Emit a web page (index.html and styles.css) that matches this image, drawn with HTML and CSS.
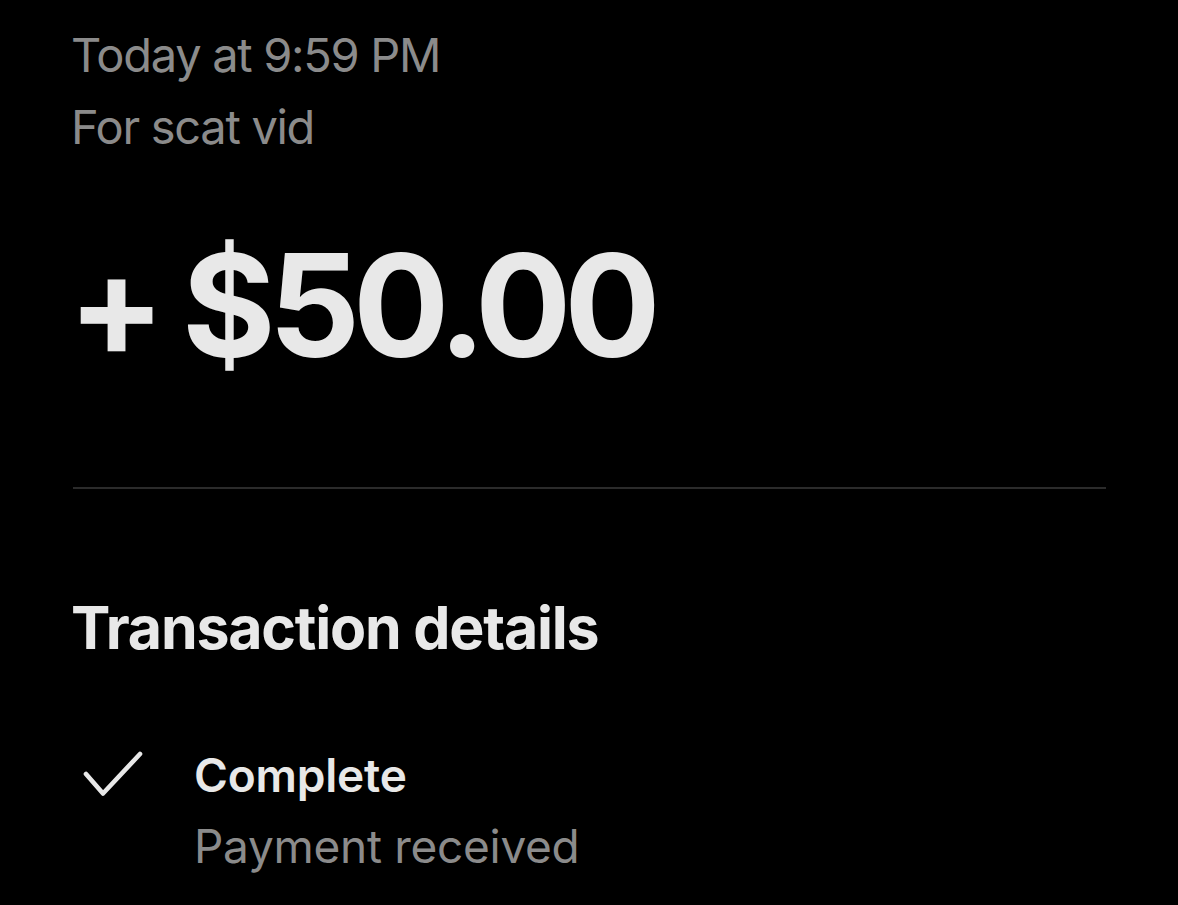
FILE: index.html
```html
<!DOCTYPE html>
<html>
<head>
<meta charset="utf-8">
<link rel="stylesheet" href="styles.css">
</head>
<body>
<main class="page">
  <section class="header">
    <div class="meta">Today at 9:59 PM</div>
    <div class="meta">For scat vid</div>
    <div class="amount"><span class="sign">+</span><span class="value">$50.00</span></div>
  </section>
  <hr class="divider">
  <section class="details">
    <h2 class="title">Transaction details</h2>
    <div class="row">
      <svg class="check" viewBox="0 0 64 52" width="64" height="52">
        <path d="M6 26 L23 45.5 L60 6" fill="none" stroke="#e8e8e8" stroke-width="4.6" stroke-linecap="round" stroke-linejoin="round"/>
      </svg>
      <div class="row-text">
        <div class="row-title">Complete</div>
        <div class="row-sub">Payment received</div>
      </div>
    </div>
  </section>
</main>
</body>
</html>
```

FILE: styles.css
```css
html, body {
  margin: 0;
  padding: 0;
  background: #000;
  height: 100%;
  overflow: hidden;
}
.page {
  padding: 19px 72px 0 71px;
  font-family: Inter, "Noto Sans", sans-serif;
  color: #e8e8e8;
}
.meta {
  font-size: 47px;
  line-height: 72px;
  color: #8b8b8b;
  letter-spacing: -1.3px;
}
.amount {
  margin-top: 67px;
  font-size: 143px;
  font-weight: 700;
  line-height: 150px;
  color: #e8e8e8;
  display: flex;
  align-items: baseline;
  white-space: nowrap;
}
.sign {
  margin-left: -3px;
  margin-right: 17px;
}
.value {
  letter-spacing: -7px;
}
.divider {
  margin: 107px 0 0 2px;
  border: none;
  height: 2px;
  background: #2b2b2b;
}
.title {
  margin: 104px 0 0 0;
  font-size: 59px;
  line-height: 70px;
  font-weight: 700;
  letter-spacing: -1.2px;
}
.row {
  display: flex;
  align-items: flex-start;
  gap: 50px;
  margin-top: 82px;
}
.check {
  margin-left: 9px;
  margin-top: 3px;
  flex: none;
}
.row-text {
  display: flex;
  flex-direction: column;
}
.row-title {
  font-size: 46px;
  font-weight: 600;
  line-height: 60px;
  letter-spacing: -0.2px;
}
.row-sub {
  margin-top: 11px;
  font-size: 46px;
  line-height: 60px;
  color: #8b8b8b;
  letter-spacing: -0.3px;
}
```
